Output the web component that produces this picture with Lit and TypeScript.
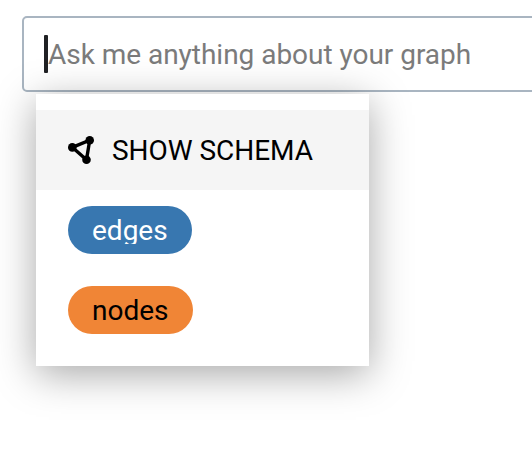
import { LitElement, html, css } from "lit";
import { customElement } from "lit/decorators.js";

@customElement("app-root")
class AppRoot extends LitElement {
  static styles = css`
    :host {
      display: block;
      position: relative;
      box-sizing: border-box;
      height: 460px;
      padding: 16px 0 0 22px;
      overflow: hidden;
      background: #fff;
      font-family: Roboto, sans-serif;
      font-size: 28px;
      color: #000;
    }
    .search {
      display: flex;
      align-items: center;
      box-sizing: border-box;
      width: 560px;
      height: 76px;
      padding-left: 20px;
      border: 2px solid #a9b5c1;
      border-radius: 5px;
      white-space: nowrap;
    }
    .caret {
      width: 4px;
      height: 38px;
      border-radius: 1px;
      background: #202124;
    }
    .placeholder { color: #7b7b7b; letter-spacing: -0.03px; }
    .title { letter-spacing: -0.04px; }
    .menu {
      position: absolute;
      left: 36px;
      top: 94px;
      box-sizing: border-box;
      width: 333px;
      height: 272px;
      padding: 16px 0;
      background: #fff;
      box-shadow: 0 8px 38px rgba(0, 0, 0, 0.35);
    }
    .row {
      display: flex;
      align-items: center;
      height: 80px;
      padding-left: 32px;
    }
    .active { background: #f5f5f5; }
    .icon { width: 28px; height: 28px; margin-right: 16px; }
    .chip {
      height: 48px;
      padding: 0 24px;
      border-radius: 24px;
      line-height: 50px;
    }
    .label {
      display: block;
      height: 38px;
      overflow: hidden;
    }
    .edges { background: #3877b0; color: #fff; }
    .nodes { background: #f08536; }
  `;

  render() {
    return html`
      <div class="search">
        <span class="caret"></span>
        <span class="placeholder">Ask me anything about your graph</span>
      </div>
      <div class="menu">
        <div class="row active">
          <svg class="icon" viewBox="0 0 28 28">
            <path d="M4.3 11.4 21.7 4.3 18.5 23.7Z" fill="none" stroke="#000" stroke-width="3.4" />
            <circle cx="4.3" cy="11.4" r="4.3" />
            <circle cx="21.7" cy="4.3" r="4.3" />
            <circle cx="18.5" cy="23.7" r="4.3" />
          </svg>
          <span class="title">SHOW SCHEMA</span>
        </div>
        <div class="row"><span class="chip edges"><span class="label">edges</span></span></div>
        <div class="row"><span class="chip nodes"><span class="label">nodes</span></span></div>
      </div>
    `;
  }
}
